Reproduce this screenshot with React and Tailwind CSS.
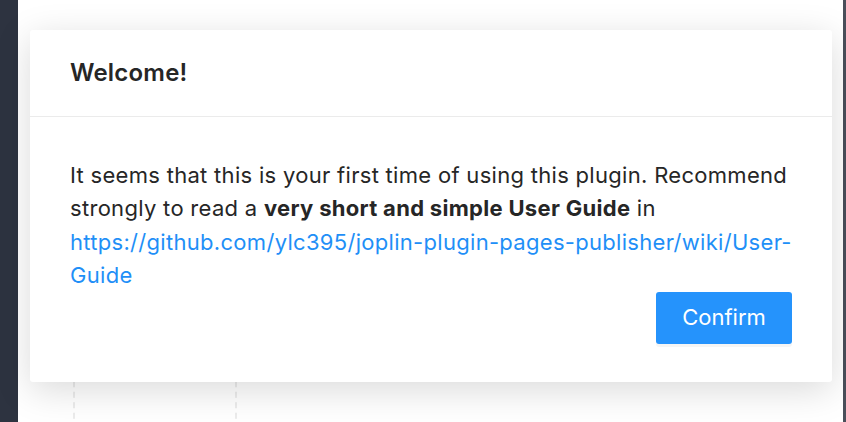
import React from 'react';

export default function App() {
  return (
    <div
      className="flex h-[422px] w-[846px] overflow-hidden bg-white text-[#262626]"
      style={{ fontFamily: 'Inter, "Noto Sans", sans-serif' }}
    >
      <div className="w-[18px] shrink-0 bg-[#2d3340]" />
      <div className="relative flex-1 bg-white">
        {/* page behind the dialog */}
        <div className="absolute left-[55px] top-[360px] h-[80px] w-[164px] border-x-2 border-dashed border-[#ececec]" />

        <div className="relative ml-[12px] mt-[30px] w-[802px] rounded-[3px] bg-white shadow-[0_8px_36px_rgba(0,0,0,0.15)]">
          <div className="flex h-[87px] items-center border-b border-[#ebebeb] px-10">
            <h2 className="text-[24px] font-semibold tracking-[0.2px] text-[#262626]">Welcome!</h2>
          </div>
          <div className="px-10 pb-[38px] pt-[42px]">
            <p className="text-[22px] leading-[33.4px] tracking-[0.3px] text-[#262626]">
              It seems that this is your first time of using this plugin. Recommend strongly to read a{' '}
              <b className="font-bold">very short and simple User Guide</b> in{' '}
              <a href="#" className="text-[#1f8ff7]">
                https://github.com/ylc395/joplin-plugin-pages-publisher/wiki/User-Guide
              </a>
            </p>
            <div className="-mt-[1px] flex justify-end">
              <button
                type="button"
                className="h-[52px] w-[136px] rounded-[3px] bg-[#2593fc] text-[22px] text-white shadow-[0_3px_0_rgba(0,0,0,0.04)]"
              >
                Confirm
              </button>
            </div>
          </div>
        </div>
      </div>
      <div className="w-[3px] shrink-0 bg-[#4a4f5a]" />
    </div>
  );
}
